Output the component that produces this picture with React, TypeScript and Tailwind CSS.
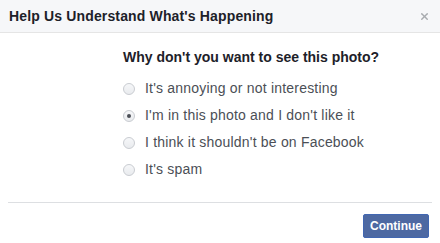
import { X } from 'lucide-react'

const options = [
  { id: 'annoying', label: "It's annoying or not interesting", checked: false },
  { id: 'inphoto', label: "I'm in this photo and I don't like it", checked: true },
  { id: 'shouldnt', label: "I think it shouldn't be on Facebook", checked: false },
  { id: 'spam', label: "It's spam", checked: false },
]

function Radio({ checked }: { checked: boolean }) {
  return (
    <span className="flex h-[12px] w-[12px] items-center justify-center rounded-full border border-[#c9ccd1] bg-gradient-to-b from-[#f6f7f9] to-[#e9ebee]">
      {checked && <span className="h-[4px] w-[4px] rounded-full bg-[#4b4f56]" />}
    </span>
  )
}

export default function App() {
  return (
    <div className="h-[243px] w-[440px] bg-white font-['Liberation_Sans',Arial,sans-serif]">
      <div className="flex h-[33px] items-center justify-between border-b border-[#e5e5e5] bg-[#f6f7f9] pl-[9px] pr-[10px]">
        <h3 className="text-[14px] font-bold tracking-[0.15px] text-[#1d2129]">
          Help Us Understand What's Happening
        </h3>
        <X className="h-[11px] w-[11px] text-[#a8abaf]" strokeWidth={3} />
      </div>

      <div className="pl-[123px] pt-[15px]">
        <p className="text-[14px] font-bold leading-[18px] text-[#1d2129]">
          Why don't you want to see this photo?
        </p>
        <div className="mt-[9px] flex flex-col">
          {options.map((option) => (
            <label key={option.id} className="flex h-[27px] items-center gap-[10px]">
              <Radio checked={option.checked} />
              <span className="text-[14px] tracking-[0.2px] text-[#4b4f56]">{option.label}</span>
            </label>
          ))}
        </div>
      </div>

      <div className="mx-[8px] mt-[19px] border-t border-[#dddfe2]" />

      <div className="flex justify-end pr-[11px] pt-[11px]">
        <button className="h-[24px] rounded-[2px] border border-[#4267b2] bg-[#4e69a2] px-[6px] text-[12px] font-bold text-white">
          Continue
        </button>
      </div>
    </div>
  )
}
